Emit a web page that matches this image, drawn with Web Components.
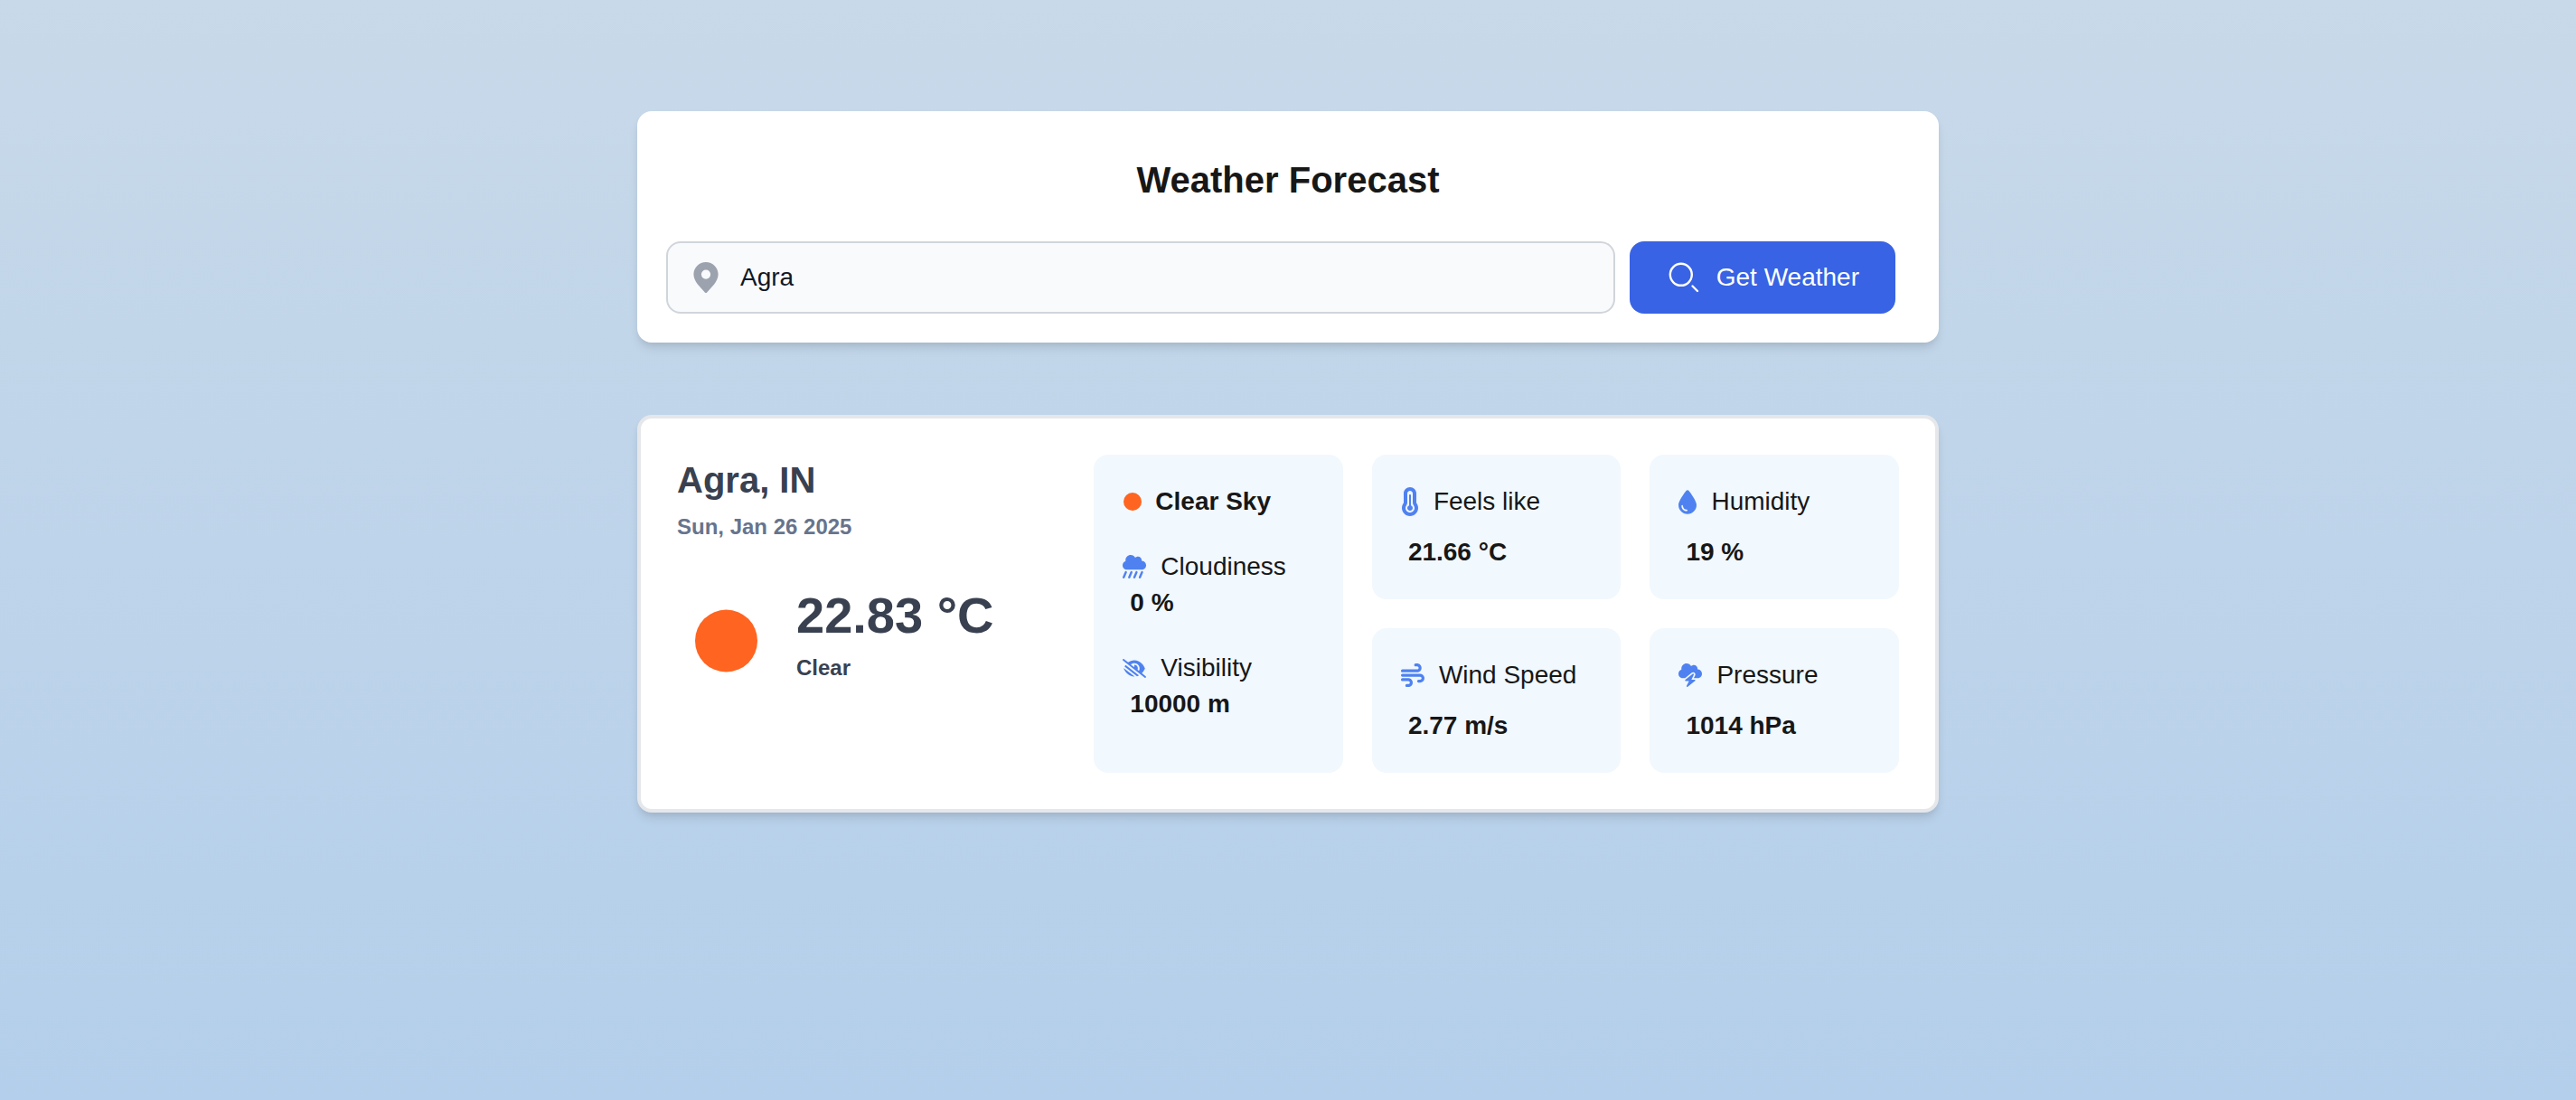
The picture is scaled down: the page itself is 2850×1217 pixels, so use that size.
<!DOCTYPE html>
<html lang="en">
<head>
<meta charset="utf-8">
<title>Weather Forecast</title>
<style>
  html { min-height: 100%; background: linear-gradient(180deg, #c8d9e9 0%, #b4cfeb 100%); }
  body { margin: 0; font-family: "Liberation Sans", Arial, sans-serif; font-size: 28px; line-height: 40px; color: #171717; }
</style>
</head>
<body>
<weather-app></weather-app>

<script>
const ICONS = {
  clear: ['-1 0 20 20', 20, 20, '<circle cx="10" cy="10" r="10" fill="#ff6421"/>'],
  cloudiness: ['0 0 512 512', 26, 26, '<path d="M96 320c-53 0-96-43-96-96c0-42.5 27.6-78.6 65.9-91.2C64.7 126.1 64 119.1 64 112C64 50.1 114.1 0 176 0c43.1 0 80.5 24.3 99.2 60c14.7-17.1 36.5-28 60.8-28c44.2 0 80 35.8 80 80c0 5.5-.6 10.8-1.6 16c.5 0 1.1 0 1.6 0c53 0 96 43 96 96s-43 96-96 96H96zM81.5 353.9c12.2 5.2 17.8 19.3 12.6 31.5l-48 112c-5.2 12.2-19.3 17.8-31.5 12.6S-3.3 490.7 1.9 478.5l48-112c5.2-12.2 19.3-17.8 31.5-12.6zm120 0c12.2 5.2 17.8 19.3 12.6 31.5l-48 112c-5.2 12.2-19.3 17.8-31.5 12.6s-17.8-19.3-12.6-31.5l48-112c5.2-12.2 19.3-17.8 31.5-12.6zm244.6 31.5l-48 112c-5.2 12.2-19.3 17.8-31.5 12.6s-17.8-19.3-12.6-31.5l48-112c5.2-12.2 19.3-17.8 31.5-12.6s17.8 19.3 12.6 31.5zM313.5 353.9c12.2 5.2 17.8 19.3 12.6 31.5l-48 112c-5.2 12.2-19.3 17.8-31.5 12.6s-17.8-19.3-12.6-31.5l48-112c5.2-12.2 19.3-17.8 31.5-12.6z"/>'],
  visibility: ['0 0 640 512', 26, 21, '<path d="M38.8 5.1C28.4-3.1 13.3-1.2 5.1 9.2S-1.2 34.7 9.2 42.9l592 464c10.4 8.2 25.5 6.3 33.7-4.1s6.3-25.5-4.1-33.7L525.6 386.7c39.6-40.6 66.4-86.1 79.9-118.4c3.3-7.9 3.3-16.7 0-24.6c-14.9-35.7-46.2-87.7-93-131.1C465.5 68.8 400.8 32 320 32c-68.2 0-125 26.3-169.3 60.8L38.8 5.1zM223 149.5c48.6-44.3 123-50.8 179.3-11.7c60.8 42.4 78.9 123.2 44.2 186.9L408 294.5c8.4-19.3 10.6-41.4 4.8-63.3c-11.1-41.5-47.8-69.4-88.6-71.1c-5.8-.2-9.2 6.1-7.4 11.7c2.1 6.4 3.3 13.2 3.3 20.3c0 10.2-2.4 19.8-6.6 28.3L223 149.5zM83.1 161.5c-11 14.4-20.5 28.7-28.4 42.2l339 265.7c18.7-5.5 36.2-13 52.6-21.8zM34.5 268.3c14.9 35.7 46.2 87.7 93 131.1C174.5 443.2 239.2 480 320 480c3.1 0 6.1-.1 9.2-.2L33.1 247.8c-1.8 6.8-1.3 14 1.4 20.5z"/>'],
  feels: ['0 0 320 512', 20, 32, '<path d="M160 64c-26.5 0-48 21.5-48 48V276.5c0 17.3-7.1 31.9-15.3 42.5C86.2 332.6 80 349.5 80 368c0 44.2 35.8 80 80 80s80-35.8 80-80c0-18.5-6.2-35.4-16.7-48.9c-8.2-10.6-15.3-25.2-15.3-42.5V112c0-26.5-21.5-48-48-48zM48 112C48 50.2 98.1 0 160 0s112 50.1 112 112V276.5c0 .1 .1 .3 .2 .6c.2 .6 .8 1.6 1.7 2.8c18.9 24.4 30.1 55 30.1 88.1c0 79.5-64.5 144-144 144S16 447.5 16 368c0-33.2 11.2-63.8 30.1-88.1c.9-1.2 1.5-2.2 1.7-2.8c.1-.3 .2-.5 .2-.6V112zM208 368c0 26.5-21.5 48-48 48s-48-21.5-48-48c0-20.9 13.4-38.7 32-45.3V144c0-8.8 7.2-16 16-16s16 7.2 16 16V322.7c18.6 6.6 32 24.4 32 45.3z"/>'],
  humidity: ['0 0 384 512', 20, 27, '<path d="M192 512C86 512 0 426 0 320C0 228.8 130.2 57.7 166.6 11.7C172.6 4.2 181.5 0 191.1 0h1.8c9.6 0 18.5 4.2 24.5 11.7C253.8 57.7 384 228.8 384 320c0 106-86 192-192 192zM96 336c0-8.8-7.2-16-16-16s-16 7.2-16 16c0 61.9 50.1 112 112 112c8.8 0 16-7.2 16-16s-7.2-16-16-16c-44.2 0-80-35.8-80-80z"/>'],
  wind: ['0 0 512 512', 26, 26, '<path d="M288 32c0 17.7 14.3 32 32 32h32c17.7 0 32 14.3 32 32s-14.3 32-32 32H32c-17.7 0-32 14.3-32 32s14.3 32 32 32H352c53 0 96-43 96-96s-43-96-96-96H320c-17.7 0-32 14.3-32 32zm64 352c0 17.7 14.3 32 32 32h32c53 0 96-43 96-96s-43-96-96-96H32c-17.7 0-32 14.3-32 32s14.3 32 32 32H416c17.7 0 32 14.3 32 32s-14.3 32-32 32H384c-17.7 0-32 14.3-32 32zM128 512h32c53 0 96-43 96-96s-43-96-96-96H32c-17.7 0-32 14.3-32 32s14.3 32 32 32H160c17.7 0 32 14.3 32 32s-14.3 32-32 32H128c-17.7 0-32 14.3-32 32s14.3 32 32 32z"/>'],
  pressure: ['0 0 512 512', 26, 26, '<path d="M0 224c0 53 43 96 96 96h47.2L290 202.5c17.6-14.1 42.6-14 60.2 .2s22.8 38.6 12.8 58.8L333.7 320H352h64c53 0 96-43 96-96s-43-96-96-96c-.5 0-1.1 0-1.6 0c1.1-5.2 1.6-10.5 1.6-16c0-44.2-35.8-80-80-80c-24.3 0-46.1 10.9-60.8 28C256.5 24.3 219.1 0 176 0C114.1 0 64 50.1 64 112c0 7.1 .7 14.1 1.9 20.8C27.6 145.4 0 181.5 0 224zm330.1 3.6c-5.8-4.7-14.2-4.7-20.1-.1l-160 128c-5.3 4.2-7.4 11.4-5.1 17.8s8.3 10.7 15.1 10.7h70.1L177.7 488.8c-3.4 6.7-1.6 14.9 4.3 19.6s14.2 4.7 20.1 .1l160-128c5.3-4.2 7.4-11.4 5.1-17.8s-8.3-10.7-15.1-10.7H281.9l52.4-104.8c3.4-6.7 1.6-14.9-4.2-19.6z"/>'],
  pin: ['0 0 16 20', 28, 34, '<path d="M8 0C3.6 0 0 3.6 0 8c0 2.4 1.2 4.6 2.6 6.4L7.3 19.7a1 1 0 0 0 1.4 0L13.4 14.4C14.8 12.6 16 10.4 16 8c0-4.4-3.6-8-8-8Zm0 11a3 3 0 1 1 0-6 3 3 0 0 1 0 6Z"/>'],
  search: ['0 0 40 40', 40, 40, '<g fill="none" stroke="currentColor" stroke-width="2.4" stroke-linecap="round"><circle cx="16.8" cy="16.8" r="12"/><path d="M29.5 29.5l5.5 5.5"/></g>'],
  sun: ['0 0 108 124', 108, 124, '<circle cx="54.5" cy="62" r="34.5" fill="#ff6421"/>'],
};

const define = (name, html, setup) => customElements.define(name, class extends HTMLElement {
  connectedCallback() {
    if (this.shadowRoot) return;
    this.attachShadow({ mode: 'open' }).innerHTML = html;
    if (setup) setup(this, this.shadowRoot);
  }
});

define('weather-icon', `
  <style>
    :host { display: flex; flex: none; }
    svg { display: block; overflow: visible; fill: currentColor; }
  </style>`, (host, root) => {
  const [box, w, h, shapes] = ICONS[host.getAttribute('name')];
  root.innerHTML += `<svg viewBox="${box}" width="${w}" height="${h}" aria-hidden="true">${shapes}</svg>`;
});

define('search-card', `
  <style>
    :host { display: block; box-sizing: border-box; padding: 48px 0 32px; background: #fff; border-radius: 16px;
      box-shadow: 0 8px 12px -2px rgba(0,0,0,.1), 0 4px 8px -4px rgba(0,0,0,.1); }
    h1 { margin: 0 0 40px; font-size: 40px; line-height: 56px; font-weight: 700; text-align: center; }
    form { display: flex; gap: 16px; padding: 0 48px 0 32px; }
    label { position: relative; display: flex; flex: 1; }
    label weather-icon { position: absolute; left: 30px; top: 0; bottom: 0; align-items: center; color: #9ca3af; }
    input { flex: 1; min-width: 0; height: 80px; box-sizing: border-box; padding: 0 32px 0 80px; font: inherit; color: #111827;
      background: #f9fafc; border: 2px solid #d0d5db; border-radius: 16px; outline: none; }
    button { display: flex; align-items: center; gap: 16px; height: 80px; padding: 0 40px; border: 0; border-radius: 16px;
      background: #3863e4; color: #fff; font: inherit; cursor: pointer; }
  </style>
  <h1><slot></slot></h1>
  <form>
    <label><weather-icon name="pin"></weather-icon><input type="text" value="Agra" aria-label="City"></label>
    <button type="button"><weather-icon name="search"></weather-icon>Get Weather</button>
  </form>`);

define('info-panel', `
  <style>
    :host { display: flex; flex-direction: column; gap: 32px; box-sizing: border-box; padding: 32px; background: #f1f8fe; border-radius: 16px; }
  </style>
  <slot></slot>`);

define('weather-metric', `
  <style>
    :host { display: flex; flex-direction: column; gap: 16px; }
    :host([compact]) { gap: 0; }
    .head { display: flex; align-items: center; gap: 16px; }
    weather-icon { color: #4f82f0; }
    .value { padding-left: 8px; font-weight: 700; }
  </style>
  <div class="head"><slot name="label"></slot></div>
  <div class="value"><slot></slot></div>`, (host, root) => {
  const icon = document.createElement('weather-icon');
  icon.setAttribute('name', host.getAttribute('icon'));
  root.querySelector('.head').prepend(icon);
});

define('sky-heading', `
  <style>
    :host { display: flex; align-items: center; gap: 16px; font-weight: 700; }
  </style>
  <weather-icon name="clear"></weather-icon><span><slot></slot></span>`);

define('current-weather', `
  <style>
    :host { display: block; color: #394150; font-weight: 700; }
    h2 { margin: 0 0 8px; font-size: 40px; line-height: 56px; }
    .date, .sky { font-size: 24px; line-height: 32px; }
    .date { color: #67748c; }
    .now { display: flex; gap: 24px; margin-top: 48px; }
    .reading { display: flex; flex-direction: column; gap: 8px; }
    .temp { font-size: 56px; line-height: 68px; }
  </style>
  <h2><slot name="place"></slot></h2>
  <div class="date"><slot name="date"></slot></div>
  <div class="now">
    <weather-icon name="sun"></weather-icon>
    <div class="reading">
      <div class="temp"><slot name="temp"></slot></div>
      <div class="sky"><slot name="sky"></slot></div>
    </div>
  </div>`);

define('result-card', `
  <style>
    :host { display: grid; grid-template-columns: repeat(3, minmax(0, 1fr)); gap: 32px; box-sizing: border-box; padding: 40px;
      background: #fff; border: 4px solid #e5e7eb; border-radius: 16px;
      box-shadow: 0 8px 12px -2px rgba(0,0,0,.1), 0 4px 8px -4px rgba(0,0,0,.1); }
    .panels { grid-column: span 2; display: grid; grid-template-columns: repeat(3, minmax(0, 1fr)); gap: 32px; }
    .tall { grid-row: span 2; }
  </style>
  <current-weather>
    <span slot="place">Agra, IN</span>
    <span slot="date">Sun, Jan 26 2025</span>
    <span slot="temp">22.83 °C</span>
    <span slot="sky">Clear</span>
  </current-weather>
  <div class="panels">
    <info-panel class="tall">
      <sky-heading>Clear Sky</sky-heading>
      <weather-metric compact icon="cloudiness"><span slot="label">Cloudiness</span>0 %</weather-metric>
      <weather-metric compact icon="visibility"><span slot="label">Visibility</span>10000 m</weather-metric>
    </info-panel>
    <info-panel><weather-metric icon="feels"><span slot="label">Feels like</span>21.66 °C</weather-metric></info-panel>
    <info-panel><weather-metric icon="humidity"><span slot="label">Humidity</span>19 %</weather-metric></info-panel>
    <info-panel><weather-metric icon="wind"><span slot="label">Wind Speed</span>2.77 m/s</weather-metric></info-panel>
    <info-panel><weather-metric icon="pressure"><span slot="label">Pressure</span>1014 hPa</weather-metric></info-panel>
  </div>`);

define('weather-app', `
  <style>
    :host { display: block; padding: 123px 32px 80px; }
    main { display: flex; flex-direction: column; gap: 80px; max-width: 1440px; margin: 0 auto; }
  </style>
  <main>
    <search-card>Weather Forecast</search-card>
    <result-card></result-card>
  </main>`);
</script>
</body>
</html>
